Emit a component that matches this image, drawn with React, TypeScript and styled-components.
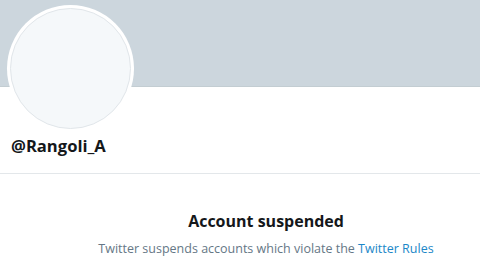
import React from "react";
import styled, { createGlobalStyle } from "styled-components";

const Global = createGlobalStyle`
  html, body { margin: 0; padding: 0; background: #ffffff; }
  body { width: 480px; height: 268px; overflow: hidden; font-family: "Open Sans", "Liberation Sans", sans-serif; }
`;

const Page = styled.div`
  width: 480px;
  height: 268px;
  display: flex;
  flex-direction: column;
  background: #ffffff;
`;

const Banner = styled.div`
  height: 87px;
  flex-shrink: 0;
  background: #ccd6dd;
  border-bottom: 1px solid #c3cdd2;
  box-sizing: border-box;
`;

const ProfileHead = styled.div`
  display: flex;
  flex-direction: column;
  padding: 0 0 0 7px;
`;

const AvatarRing = styled.div`
  width: 127px;
  height: 127px;
  margin-top: -82px;
  border-radius: 50%;
  background: #ffffff;
  display: flex;
  align-items: center;
  justify-content: center;
`;

const AvatarFace = styled.div`
  width: 121px;
  height: 121px;
  box-sizing: border-box;
  border-radius: 50%;
  background: #f5f8fa;
  border: 1px solid #e1e6ea;
`;

const Handle = styled.div`
  margin: 3px 0 0 4px;
  font-family: "Open Sans", "Liberation Sans", sans-serif;
  font-weight: 700;
  font-size: 16.6px;
  line-height: 22px;
  color: #14171a;
`;

const Divider = styled.div`
  margin-top: 16px;
  height: 1px;
  background: #e3e7ea;
`;

const Notice = styled.div`
  display: flex;
  flex-direction: column;
  align-items: center;
  padding: 36px 0 0 52px;
`;

const Title = styled.div`
  font-family: "Open Sans", "Liberation Sans", sans-serif;
  font-weight: 700;
  font-size: 16px;
  line-height: 22px;
  color: #14171a;
`;

const Message = styled.div`
  margin-top: 8px;
  font-family: "Open Sans", "Liberation Sans", sans-serif;
  font-size: 12.5px;
  line-height: 18px;
  color: #657786;
`;

const RuleLink = styled.a`
  color: #1b87c8;
  text-decoration: none;
`;

export default function App() {
  return (
    <>
      <Global />
      <Page>
        <Banner />
        <ProfileHead>
          <AvatarRing>
            <AvatarFace />
          </AvatarRing>
          <Handle>@Rangoli_A</Handle>
        </ProfileHead>
        <Divider />
        <Notice>
          <Title>Account suspended</Title>
          <Message>
            Twitter suspends accounts which violate the <RuleLink href="#">Twitter Rules</RuleLink>
          </Message>
        </Notice>
      </Page>
    </>
  );
}
